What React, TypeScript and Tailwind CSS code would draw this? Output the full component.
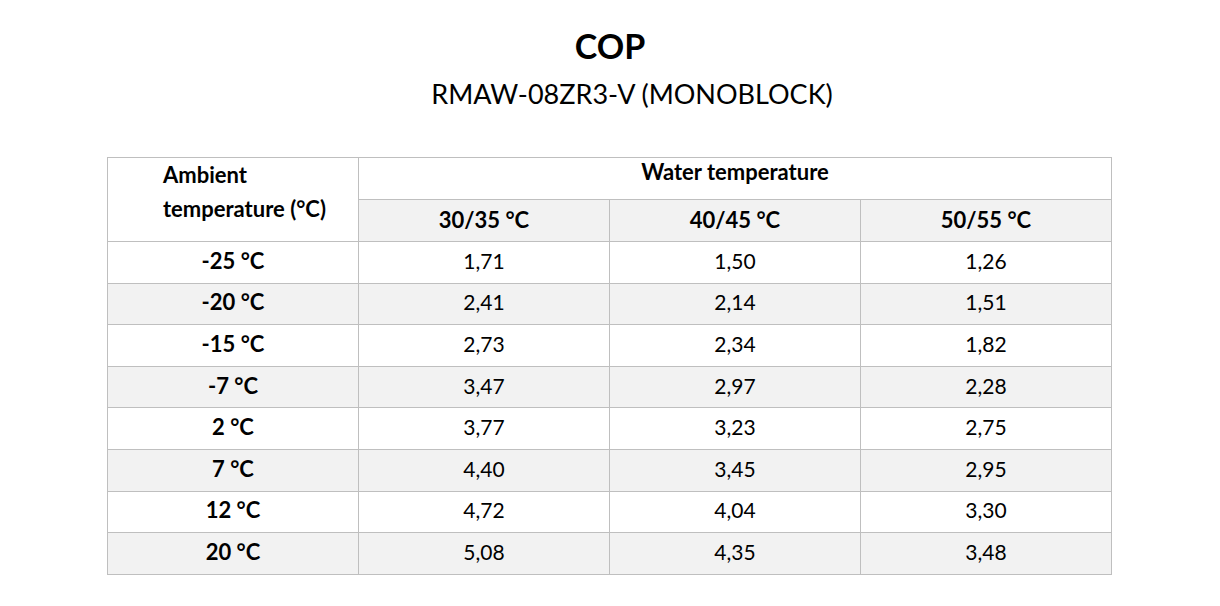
const rows: [string, string, string, string][] = [
  ['-25 °C', '1,71', '1,50', '1,26'],
  ['-20 °C', '2,41', '2,14', '1,51'],
  ['-15 °C', '2,73', '2,34', '1,82'],
  ['-7 °C', '3,47', '2,97', '2,28'],
  ['2 °C', '3,77', '3,23', '2,75'],
  ['7 °C', '4,40', '3,45', '2,95'],
  ['12 °C', '4,72', '4,04', '3,30'],
  ['20 °C', '5,08', '4,35', '3,48'],
]

export default function App() {
  return (
    <div className="w-[1220px] h-[606px] bg-white text-black font-['Lato','Open_Sans',sans-serif]">
      <div className="pt-[26px] text-center">
        <h1 className="text-[34px] leading-[40px] font-bold">COP</h1>
        <p className="mt-[12px] pl-[44px] text-[27px] leading-[32px]">RMAW-08ZR3-V (MONOBLOCK)</p>
      </div>
      <table className="mt-[47px] ml-[107px] w-[1004px] border-collapse table-fixed text-[21px]">
        <colgroup>
          <col className="w-[251px]" />
          <col className="w-[251px]" />
          <col className="w-[251px]" />
          <col className="w-[251px]" />
        </colgroup>
        <thead>
          <tr className="h-[42px]">
            <th rowSpan={2} className="border border-[#bfbfbf] align-top text-left text-[22px] font-bold pl-[55px] pt-0 leading-[34px]">
              Ambient<br />temperature (°C)
            </th>
            <th colSpan={3} className="border border-[#bfbfbf] align-top text-[22px] leading-[26px] font-bold pt-[1px]">Water temperature</th>
          </tr>
          <tr className="h-[42px] bg-[#f2f2f2]">
            <th className="border border-[#bfbfbf] text-[22px] leading-[28px] font-bold pb-[1px]">30/35 °C</th>
            <th className="border border-[#bfbfbf] text-[22px] leading-[28px] font-bold pb-[1px]">40/45 °C</th>
            <th className="border border-[#bfbfbf] text-[22px] leading-[28px] font-bold pb-[1px]">50/55 °C</th>
          </tr>
        </thead>
        <tbody>
          {rows.map((r, i) => (
            <tr key={r[0]} className={`h-[41.6px] ${i % 2 === 1 ? 'bg-[#f2f2f2]' : 'bg-white'}`}>
              <td className="border border-[#bfbfbf] text-center text-[22px] leading-[28px] font-bold pb-[3px]">{r[0]}</td>
              <td className="border border-[#bfbfbf] text-center leading-[28px] pb-[3px]">{r[1]}</td>
              <td className="border border-[#bfbfbf] text-center leading-[28px] pb-[3px]">{r[2]}</td>
              <td className="border border-[#bfbfbf] text-center leading-[28px] pb-[3px]">{r[3]}</td>
            </tr>
          ))}
        </tbody>
      </table>
    </div>
  )
}
